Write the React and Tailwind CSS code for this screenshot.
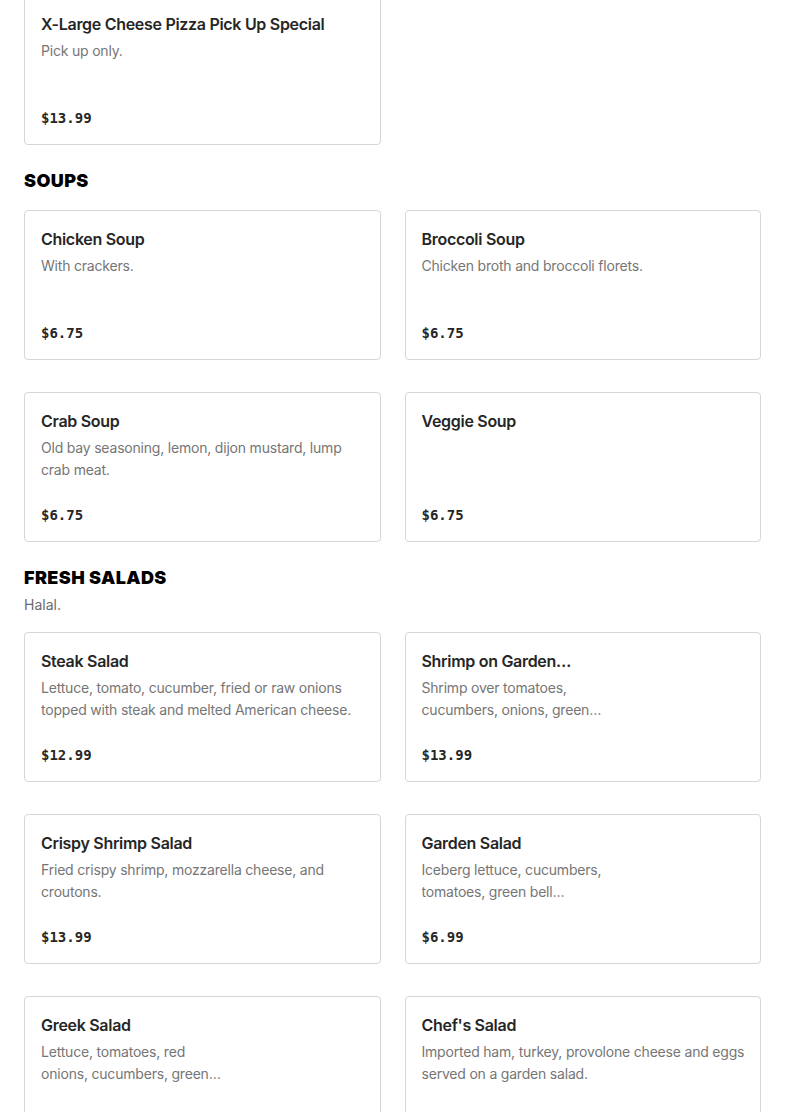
const sections = [
  {
    title: null,
    items: [
      { name: 'X-Large Cheese Pizza Pick Up Special', desc: 'Pick up only.', price: '$13.99' },
    ],
  },
  {
    title: 'SOUPS',
    items: [
      { name: 'Chicken Soup', desc: 'With crackers.', price: '$6.75' },
      { name: 'Broccoli Soup', desc: 'Chicken broth and broccoli florets.', price: '$6.75' },
      { name: 'Crab Soup', desc: 'Old bay seasoning, lemon, dijon mustard, lump crab meat.', price: '$6.75' },
      { name: 'Veggie Soup', desc: '', price: '$6.75' },
    ],
  },
  {
    title: 'FRESH SALADS',
    note: 'Halal.',
    items: [
      { name: 'Steak Salad', desc: 'Lettuce, tomato, cucumber, fried or raw onions topped with steak and melted American cheese.', price: '$12.99' },
      { name: 'Shrimp on Garden Salad', desc: 'Shrimp over tomatoes, cucumbers, onions, green peppers, carrots and cheese.', price: '$13.99', narrow: true },
      { name: 'Crispy Shrimp Salad', desc: 'Fried crispy shrimp, mozzarella cheese, and croutons.', price: '$13.99' },
      { name: 'Garden Salad', desc: 'Iceberg lettuce, cucumbers, tomatoes, green bell peppers, onions and carrots.', price: '$6.99', narrow: true },
      { name: 'Greek Salad', desc: 'Lettuce, tomatoes, red onions, cucumbers, green peppers, feta cheese and olives.', price: '$10.99', narrow: true },
      { name: "Chef's Salad", desc: 'Imported ham, turkey, provolone cheese and eggs served on a garden salad.', price: '$11.99' },
    ],
  },
];

function ItemCard({ item }) {
  return (
    <div className="flex min-h-[150px] flex-col rounded-[4px] border border-[#d6d6d6] bg-white pt-4 pr-3 pb-4 pl-4">
      <p
        className={
          'truncate text-[16px] leading-6 font-semibold tracking-[-0.3px] text-[#262626] ' +
          (item.narrow ? 'w-[153px]' : '')
        }
      >
        {item.name}
      </p>
      {item.desc && (
        <p
          className={
            'mt-1 line-clamp-2 text-[14px] leading-[22px] tracking-[-0.2px] text-[#767676] ' +
            (item.narrow ? 'w-[190px]' : '')
          }
        >
          {item.desc}
        </p>
      )}
      <p className="mt-auto pt-4 font-['DejaVu_Sans_Mono',monospace] text-[14px] leading-5 font-bold text-[#262626]">
        {item.price}
      </p>
    </div>
  );
}

export default function App() {
  return (
    <div className="min-h-screen overflow-hidden bg-white px-6 font-['Inter',sans-serif]">
      <div className="-mt-[5px] flex flex-col pb-10">
        {sections.map((section, i) => (
          <section key={i} className={i === 0 ? '' : 'mt-6'}>
            {section.title && (
              <div className={section.note ? 'mb-4' : 'mb-[17px]'}>
                <h2 className="text-[18px] leading-6 font-black tracking-[0.4px] text-black">{section.title}</h2>
                {section.note && <p className="mt-1 text-[14px] leading-[22px] text-[#6b6b6b]">{section.note}</p>}
              </div>
            )}
            <div className="grid grid-cols-2 gap-x-6 gap-y-8">
              {section.items.map((item) => (
                <ItemCard key={item.name} item={item} />
              ))}
            </div>
          </section>
        ))}
      </div>
    </div>
  );
}
